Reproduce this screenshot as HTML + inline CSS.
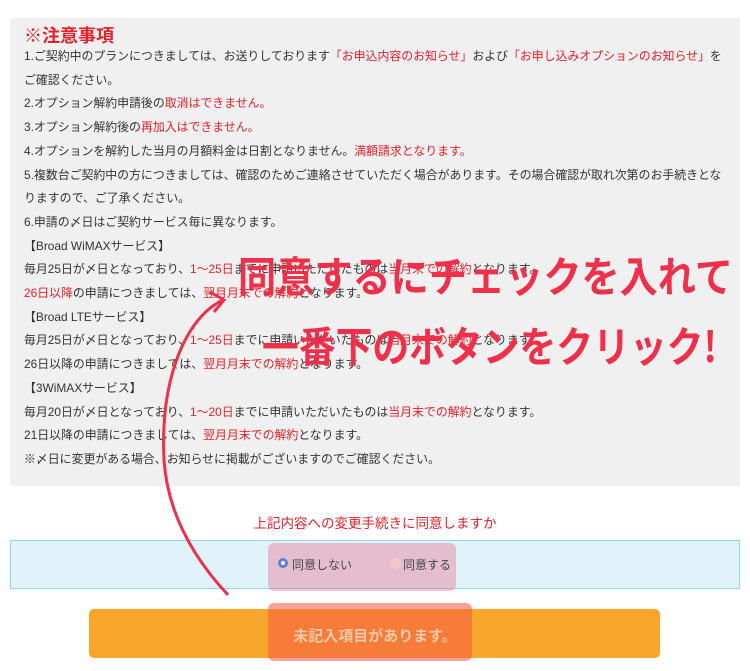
<!DOCTYPE html>
<html><head><meta charset="utf-8"><style>
body{margin:0;width:750px;height:671px;background:#fff;font-family:"Liberation Sans","Noto Sans CJK JP",sans-serif;position:relative;overflow:hidden}
.box{position:absolute;left:10px;top:18px;width:730px;height:468px;background:#f0f0f0}
.t{position:absolute;left:24px;top:22px;font-size:18px;font-weight:bold;color:#e8202a}
.lines{position:absolute;left:24px;top:45px;font-size:11.9px;color:#333;line-height:23.7px;white-space:nowrap}
.r{color:#e8202a}
.q{position:absolute;left:0;width:750px;top:512px;text-align:center;color:#e8202a;font-size:13.5px}
.blue{position:absolute;left:10px;top:540px;width:728px;height:47px;background:#e0f3fa;border:1px solid #8fd6ef}
.btn{position:absolute;left:89px;top:609px;width:571px;height:49px;background:#f8a62c;border-radius:5px}
.pink{position:absolute;background:rgba(235,110,140,0.4)}
</style></head><body>
<div class="box"></div>
<div class="t">※注意事項</div>
<div class="lines">
1.ご契約中のプランにつきましては、お送りしております<span class="r">「お申込内容のお知らせ」</span>および<span class="r">「お申し込みオプションのお知らせ」</span>を<br>
ご確認ください。<br>
2.オプション解約申請後の<span class="r">取消はできません。</span><br>
3.オプション解約後の<span class="r">再加入はできません。</span><br>
4.オプションを解約した当月の月額料金は日割となりません。<span class="r">満額請求となります。</span><br>
5.複数台ご契約中の方につきましては、確認のためご連絡させていただく場合があります。その場合確認が取れ次第のお手続きとな<br>
りますので、ご了承ください。<br>
6.申請の〆日はご契約サービス毎に異なります。<br>
【Broad WiMAXサービス】<br>
毎月25日が〆日となっており、<span class="r">1～25日</span>までに申請いただいたものは<span class="r">当月末での解約</span>となります。<br>
<span class="r">26日以降</span>の申請につきましては、<span class="r">翌月月末での解約</span>となります。<br>
【Broad LTEサービス】<br>
毎月25日が〆日となっており、<span class="r">1～25日</span>までに申請いただいたものは<span class="r">当月末での解約</span>となります。<br>
26日以降の申請につきましては、<span class="r">翌月月末での解約</span>となります。<br>
【3WiMAXサービス】<br>
毎月20日が〆日となっており、<span class="r">1～20日</span>までに申請いただいたものは<span class="r">当月末での解約</span>となります。<br>
21日以降の申請につきましては、<span class="r">翌月月末での解約</span>となります。<br>
※〆日に変更がある場合、お知らせに掲載がございますのでご確認ください。
</div>
<div class="q">上記内容への変更手続きに同意しますか</div>
<div class="blue"></div>
<div class="btn"></div>
<div class="pink" style="left:268px;top:543px;width:188px;height:48px;border-radius:6px"></div>
<div class="pink" style="left:268px;top:603px;width:204px;height:58px;background:rgba(245,90,70,0.55);border-radius:6px"></div>
<div style="position:absolute;left:278px;top:558px;width:10px;height:10px;border-radius:50%;background:#5b7fd8;box-shadow:inset 0 0 0 3px #5b7fd8,inset 0 0 0 5px #fff"></div>
<div style="position:absolute;left:292px;top:556px;font-size:12px;color:#444">同意しない</div>
<div style="position:absolute;left:390px;top:558px;width:11px;height:11px;border-radius:50%;background:#f5c4cc"></div>
<div style="position:absolute;left:403px;top:556px;font-size:12px;color:#444">同意する</div>
<div style="position:absolute;left:0;width:750px;top:625px;text-align:center;color:#f6c9a8;font-size:15px;font-weight:bold">未記入項目があります。</div>
<svg style="position:absolute;left:0;top:0" width="750" height="671">
<path d="M223,300 C185,318 160,380 164,460 C168,520 200,565 228,595" fill="none" stroke="#f0304a" stroke-width="3"/>
<path d="M210,292 L224,300 L214,312" fill="none" stroke="#f0304a" stroke-width="3"/>
<text x="238" y="292" font-size="42" font-weight="bold" fill="#f0304a" font-family="'Noto Sans CJK JP',sans-serif" textLength="495" lengthAdjust="spacingAndGlyphs">同意するにチェックを入れて</text>
<text x="262" y="362" font-size="42" font-weight="bold" fill="#f0304a" font-family="'Noto Sans CJK JP',sans-serif" textLength="455" lengthAdjust="spacingAndGlyphs">一番下のボタンをクリック!</text>
</svg>
</body></html>
